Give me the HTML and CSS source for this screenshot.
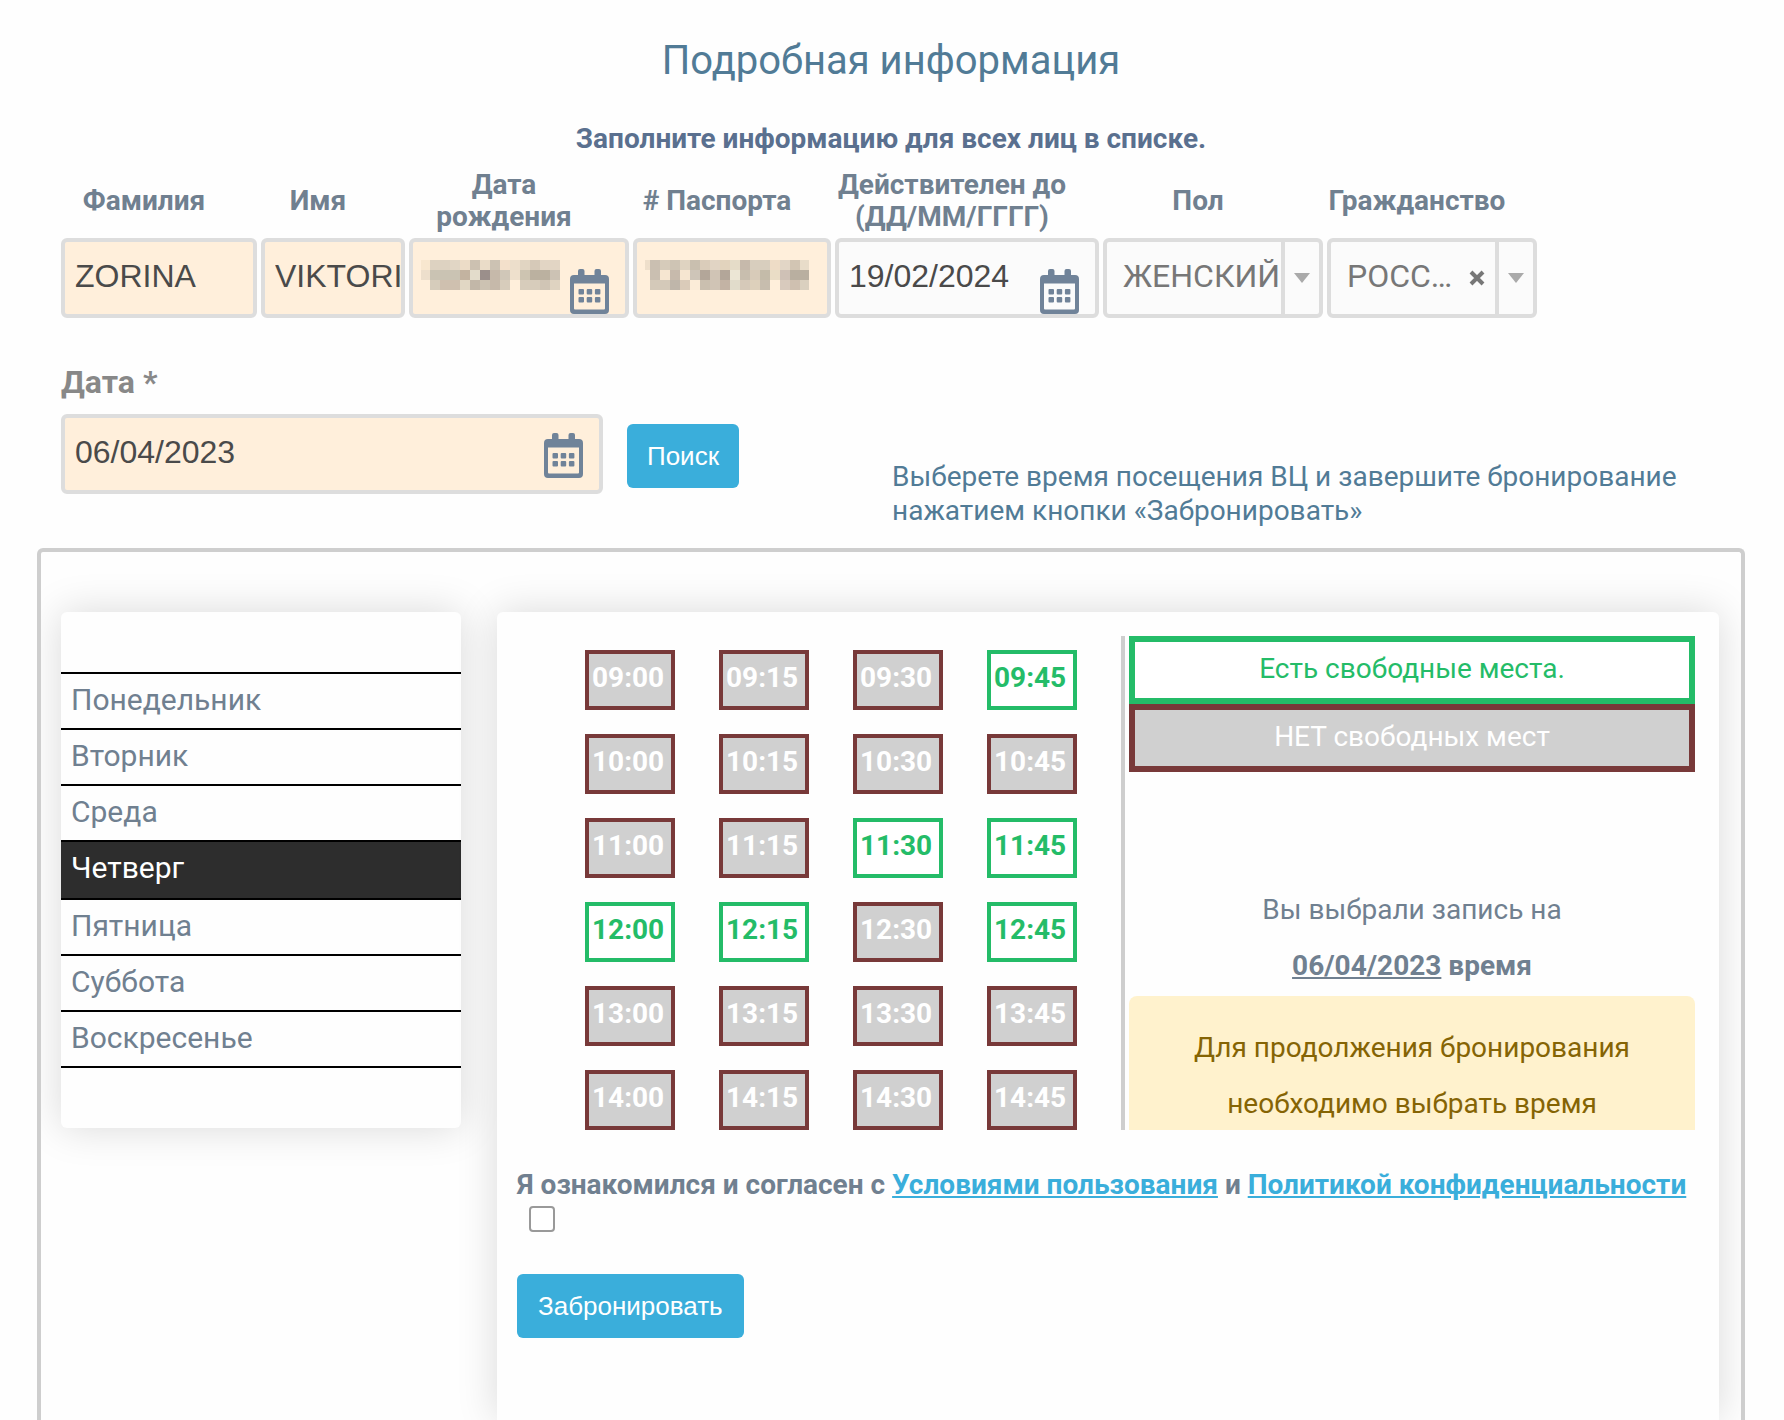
FILE: index.html
```
<!DOCTYPE html>
<html lang="ru">
<head>
<meta charset="utf-8">
<title>Подробная информация</title>
<link rel="stylesheet" href="styles.css">
</head>
<body>
<svg class="sprite" aria-hidden="true">
  <symbol id="calendar" viewBox="0 0 39 45">
    <path fill-rule="evenodd" d="M8 6V2q0-2 2-2h2.500q2 0 2 2v4h10V2q0-2 2-2h2.500q2 0 2 2v4h4q4 0 4 4v31q0 4-4 4h-31q-4 0-4-4V10q0-4 4-4zM4 14.500v25q0 1 1 1h29q1 0 1-1v-25z"/>
    <path d="M9.500 20h3.500q1 0 1 1v3.500q0 1-1 1H9.500q-1 0-1-1V21q0-1 1-1zm8.200 0h3.500q1 0 1 1v3.500q0 1-1 1h-3.500q-1 0-1-1V21q0-1 1-1zm8.200 0h3.500q1 0 1 1v3.500q0 1-1 1h-3.500q-1 0-1-1V21q0-1 1-1zM9.500 28h3.500q1 0 1 1v3.500q0 1-1 1H9.500q-1 0-1-1V29q0-1 1-1zm8.200 0h3.500q1 0 1 1v3.500q0 1-1 1h-3.500q-1 0-1-1V29q0-1 1-1zm8.200 0h3.500q1 0 1 1v3.500q0 1-1 1h-3.500q-1 0-1-1V29q0-1 1-1z"/>
  </symbol>
</svg>

<header class="intro">
  <h1 class="title">Подробная информация</h1>
  <p class="subtitle">Заполните информацию для всех лиц в списке.</p>
</header>

<table class="people">
  <colgroup>
    <col class="w-surname"><col class="w-name"><col class="w-birth"><col class="w-passport"><col class="w-valid"><col class="w-sex"><col class="w-country">
  </colgroup>
  <thead>
    <tr>
      <th><label for="surname">Фамилия</label></th>
      <th><label for="name">Имя</label></th>
      <th><label for="birth">Дата рождения</label></th>
      <th><label for="passport"># Паспорта</label></th>
      <th class="nowrap"><label for="valid">Действителен до<br>(ДД/ММ/ГГГГ)</label></th>
      <th><label for="sex">Пол</label></th>
      <th><label for="country">Гражданство</label></th>
    </tr>
  </thead>
  <tbody>
    <tr>
      <td><div class="field filled"><input id="surname" type="text" value="ZORINA"></div></td>
      <td><div class="field filled"><input id="name" type="text" value="VIKTORIIA"></div></td>
      <td>
        <div class="field filled">
          <input id="birth" type="text">
          <svg class="mask" width="139" height="30" viewBox="1 0 139 30" shape-rendering="crispEdges" aria-hidden="true">
            <path fill="#f8e7cf" d="M0 0h10v10H0z"/><path fill="#ddd2c1" d="M10 0h20v10H10z"/><path fill="#e1d6c5" d="M30 0h10v10H30z"/><path fill="#ecdcc7" d="M40 0h10v10H40z"/><path fill="#ccc1b1" d="M50 0h10v10H50z"/><path fill="#eadcc8" d="M60 0h10v10H60z"/><path fill="#ccc2b3" d="M70 0h10v10H70z"/><path fill="#f3e0cb" d="M80 0h10v10H80z"/><path fill="#ecdecb" d="M90 0h10v10H90z"/><path fill="#e1d5c2" d="M100 0h10v10h-10z"/><path fill="#d6c9b8" d="M110 0h10v10h-10z"/><path fill="#e2d5c4" d="M120 0h20v10h-20z"/>
            <path fill="#eddfcc" d="M0 10h10v10H0z"/><path fill="#cac3b3" d="M10 10h30v10H10z"/><path fill="#c3b3a0" d="M40 10h10v10H40z"/><path fill="#e3dccb" d="M50 10h10v10H50z"/><path fill="#9b8f8b" d="M60 10h10v10H60z"/><path fill="#c6b9aa" d="M70 10h10v20H70z"/><path fill="#d0c7b8" d="M80 10h10v10H80z"/><path fill="#eee0cc" d="M90 10h10v10H90z"/><path fill="#cdc4b1" d="M100 10h10v10h-10z"/><path fill="#bbb1a0" d="M110 10h20v10h-20z"/><path fill="#ccc2b4" d="M130 10h10v10h-10z"/>
            <path fill="#d6ccbb" d="M10 20h10v10H10z"/><path fill="#cfc0af" d="M20 20h20v10H20z"/><path fill="#e1d7c4" d="M40 20h10v10H40z"/><path fill="#c2b7a8" d="M50 20h10v10H50z"/><path fill="#ccc2b2" d="M60 20h10v10H60z"/><path fill="#d7ccbb" d="M80 20h10v10H80zM100 20h20v10h-20z"/><path fill="#d0c5b5" d="M120 20h10v10h-10z"/><path fill="#dfd3c1" d="M130 20h10v10h-10z"/>
          </svg>
          <svg class="icon low" aria-hidden="true"><use href="#calendar"/></svg>
        </div>
      </td>
      <td>
        <div class="field filled">
          <input id="passport" type="text">
          <svg class="mask" width="164" height="30" viewBox="5 0 164 30" shape-rendering="crispEdges" aria-hidden="true">
            <path fill="#eedfcb" d="M0 0h10v10H0z"/><path fill="#cabfb1" d="M10 0h10v20H10z"/><path fill="#d6cbba" d="M20 0h10v10H20z"/><path fill="#cec4b4" d="M30 0h10v10H30z"/><path fill="#dfd3c1" d="M40 0h10v10H40z"/><path fill="#c9bfaf" d="M50 0h10v10H50z"/><path fill="#daccba" d="M60 0h10v10H60z"/><path fill="#e1d4c4" d="M70 0h10v10H70z"/><path fill="#e2d3bd" d="M80 0h10v10H80z"/><path fill="#e5dcc8" d="M90 0h10v10H90z"/><path fill="#c6b9ab" d="M100 0h10v10h-10z"/><path fill="#d8cebe" d="M110 0h20v10h-20z"/><path fill="#eedcc6" d="M130 0h10v10h-10z"/><path fill="#e2d6c6" d="M140 0h10v10h-10z"/><path fill="#d2c5b3" d="M150 0h10v10h-10z"/><path fill="#e8dcc9" d="M160 0h10v10h-10z"/>
            <path fill="#f6e6d1" d="M20 10h10v10H20zM40 10h10v10H40z"/><path fill="#c7baac" d="M30 10h10v10H30z"/><path fill="#cec5b8" d="M50 10h10v10H50z"/><path fill="#b3a699" d="M60 10h10v10H60zM80 10h10v10H80z"/><path fill="#d0c4b5" d="M70 10h10v20H70z"/><path fill="#ece6d5" d="M90 10h10v10H90z"/><path fill="#c8beae" d="M100 10h10v10h-10z"/><path fill="#d8cbb9" d="M110 10h10v10h-10z"/><path fill="#c4bba9" d="M120 10h10v10h-10z"/><path fill="#eaddc6" d="M130 10h10v10h-10z"/><path fill="#cfc1b6" d="M140 10h10v10h-10z"/><path fill="#b9afa0" d="M150 10h20v10h-20z"/>
            <path fill="#d4c9b9" d="M10 20h20v10H10z"/><path fill="#bfb6aa" d="M30 20h10v10H30z"/><path fill="#dacbb9" d="M40 20h10v10H40z"/><path fill="#fbecd8" d="M50 20h10v10H50z"/><path fill="#cabfaf" d="M60 20h10v10H60z"/><path fill="#c3b3a4" d="M80 20h10v10H80z"/><path fill="#e1dccb" d="M90 20h10v10H90z"/><path fill="#d6c9b9" d="M100 20h10v10h-10z"/><path fill="#ddd0bb" d="M110 20h10v10h-10z"/><path fill="#c7bdae" d="M120 20h10v10h-10z"/><path fill="#d8cabd" d="M140 20h10v10h-10z"/><path fill="#cfc0b0" d="M150 20h10v10h-10z"/><path fill="#dad0bf" d="M160 20h10v10h-10z"/>
          </svg>
        </div>
      </td>
      <td><div class="field"><input id="valid" type="text" value="19/02/2024"><svg class="icon low" aria-hidden="true"><use href="#calendar"/></svg></div></td>
      <td>
        <div class="field choice">
          <select id="sex"><option>ЖЕНСКИЙ</option><option>МУЖСКОЙ</option></select>
          <span class="arrow"></span>
        </div>
      </td>
      <td>
        <div class="field choice">
          <select id="country"><option>РОССИЙСКАЯ ФЕДЕРАЦИЯ</option></select>
          <button class="clear" type="button" aria-label="Очистить"><svg width="16" height="16" viewBox="0 0 16 16" aria-hidden="true"><path d="M2 2l12 12M14 2L2 14"/></svg></button>
          <span class="arrow"></span>
        </div>
      </td>
    </tr>
  </tbody>
</table>

<form class="search">
  <div class="search-date">
    <label class="search-label" for="date">Дата *</label>
    <div class="field filled"><input id="date" type="text" value="06/04/2023"><svg class="icon" aria-hidden="true"><use href="#calendar"/></svg></div>
  </div>
  <button class="primary search-button" type="button">Поиск</button>
  <p class="hint">Выберете время посещения ВЦ и завершите бронирование нажатием кнопки «Забронировать»</p>
</form>

<main class="panel">
  <ul class="days">
    <li><a href="#">Понедельник</a></li>
    <li><a href="#">Вторник</a></li>
    <li><a href="#">Среда</a></li>
    <li><a class="current" href="#">Четверг</a></li>
    <li><a href="#">Пятница</a></li>
    <li><a href="#">Суббота</a></li>
    <li><a href="#">Воскресенье</a></li>
  </ul>

  <section class="booking">
    <div class="schedule">
      <div class="times">
        <button class="time" type="button">09:00</button><button class="time" type="button">09:15</button><button class="time" type="button">09:30</button><button class="time free" type="button">09:45</button>
        <button class="time" type="button">10:00</button><button class="time" type="button">10:15</button><button class="time" type="button">10:30</button><button class="time" type="button">10:45</button>
        <button class="time" type="button">11:00</button><button class="time" type="button">11:15</button><button class="time free" type="button">11:30</button><button class="time free" type="button">11:45</button>
        <button class="time free" type="button">12:00</button><button class="time free" type="button">12:15</button><button class="time" type="button">12:30</button><button class="time free" type="button">12:45</button>
        <button class="time" type="button">13:00</button><button class="time" type="button">13:15</button><button class="time" type="button">13:30</button><button class="time" type="button">13:45</button>
        <button class="time" type="button">14:00</button><button class="time" type="button">14:15</button><button class="time" type="button">14:30</button><button class="time" type="button">14:45</button>
      </div>
      <div class="summary">
        <p class="legend free">Есть свободные места.</p>
        <p class="legend">НЕТ свободных мест</p>
        <p class="chosen">Вы выбрали запись на<br><b><u>06/04/2023</u> время</b></p>
        <p class="notice">Для продолжения бронирования<br>необходимо выбрать время</p>
      </div>
    </div>
    <p class="terms">
      <label for="agree">Я ознакомился и согласен с <a href="#">Условиями пользования</a> и <a href="#">Политикой конфиденциальности</a></label>
      <input id="agree" type="checkbox">
    </p>
    <button class="primary" type="button">Забронировать</button>
  </section>
</main>
</body>
</html>
```
FILE: styles.css
```
* {
  box-sizing: border-box;
}

body {
  display: flex;
  flex-direction: column;
  min-height: 100vh;
  margin: 0;
  padding: 0 39px 0 37px;
  background: #fefefe;
  color: #708090;
  font: 28px/34px Roboto, sans-serif;
}

h1, p, ul {
  margin: 0;
  padding: 0;
}

input, select, button {
  font: inherit;
}

.sprite {
  position: absolute;
  width: 0;
  height: 0;
}

.intro {
  padding-top: 37px;
  text-align: center;
}

.title {
  color: #517b96;
  font-size: 40px;
  font-weight: 400;
  line-height: 48px;
}

.subtitle {
  margin-top: 38px;
  color: #5a708f;
  font-weight: 700;
  line-height: 32px;
}

/* Traveller details */
.people {
  width: 1480px;
  margin: 14px 0 0 22px;
  border-collapse: collapse;
  table-layout: fixed;
}

.w-surname { width: 200px; }
.w-name { width: 148px; }
.w-birth { width: 224px; }
.w-passport { width: 202px; }
.w-valid { width: 268px; }
.w-sex { width: 224px; }
.w-country { width: 214px; }

.people th {
  padding: 0 30px 5px 0;
  line-height: 32px;
}

.people .nowrap {
  white-space: nowrap;
}

.people td {
  padding: 0 2px;
}

.field {
  position: relative;
  display: flex;
  height: 80px;
  border: 4px solid #ddd;
  border-radius: 6px;
  background: #fbfbfb;
}

.field.filled {
  background: #ffefdb;
}

.field input {
  width: 100%;
  min-width: 0;
  padding: 0 0 4px 10px;
  border: 0;
  background: none;
  color: #4a4a4a;
  font-family: "Liberation Sans", Arial, sans-serif;
  font-size: 32px;
}

.icon {
  position: absolute;
  top: 15px;
  right: 16px;
  width: 39px;
  height: 45px;
  fill: #708399;
}

.icon.low {
  top: 27px;
}

.mask {
  position: absolute;
  top: 18px;
  left: 8px;
}

.choice select {
  flex: 1;
  min-width: 0;
  padding: 0 0 4px 16px;
  border: 0;
  background: none;
  color: #777;
  appearance: none;
  font-size: 32px;
  text-overflow: ellipsis;
}

.clear {
  display: grid;
  place-items: center;
  width: 36px;
  padding: 0;
  border: 0;
  background: none;
}

.clear svg {
  stroke: #777;
  stroke-width: 4;
}

.arrow {
  display: grid;
  place-items: center;
  width: 38px;
  border-left: 4px solid #ddd;
}

.arrow::after {
  border: 8px solid transparent;
  border-width: 10px 8px 0;
  border-top-color: #aaa;
  content: "";
}

/* Date search */
.search {
  display: flex;
  align-items: flex-start;
  margin-top: 44px;
  padding: 0 22px 0 24px;
}

.search-date {
  width: 542px;
}

.search-label {
  display: block;
  margin-bottom: 12px;
  color: #888;
  font-size: 32px;
  font-weight: 700;
  line-height: 40px;
}

.primary {
  height: 64px;
  padding: 0 21px;
  border: 0;
  border-radius: 6px;
  background: #3aaedb;
  color: #fff;
  font-family: "Liberation Sans", Arial, sans-serif;
  font-size: 26px;
}

.search-button {
  width: 112px;
  margin: 62px 153px 0 24px;
  padding: 0;
}

.hint {
  flex: 1;
  margin-top: 98px;
  color: #517b96;
}

/* Schedule */
.panel {
  display: flex;
  flex: 1;
  align-items: flex-start;
  gap: 36px;
  margin-top: 20px;
  padding: 60px 22px 0 20px;
  border: 4px solid #cecece;
  border-bottom: 0;
  border-radius: 6px 6px 0 0;
  overflow: hidden;
}

.days, .booking {
  border-radius: 6px;
  background: #fefefe;
  box-shadow: 0 0 40px rgba(0, 0, 0, .15);
}

.days {
  width: 400px;
  padding: 60px 0;
  list-style: none;
}

.days li {
  border-bottom: 2px solid #000;
}

.days li:first-child {
  border-top: 2px solid #000;
}

.days a {
  display: block;
  padding: 0 10px 2px;
  color: #708090;
  font-size: 30px;
  line-height: 52px;
  text-decoration: none;
}

.days .current {
  padding-bottom: 4px;
  background: #2d2d2d;
  color: #fff;
}

.booking {
  flex: 1;
  align-self: stretch;
  padding: 24px 24px 80px 20px;
  border-radius: 6px 6px 0 0;
}

.schedule {
  display: flex;
  height: 494px;
  overflow: hidden;
}

.times {
  display: grid;
  flex: 1;
  grid-template-columns: repeat(4, 90px);
  grid-auto-rows: 60px;
  gap: 24px 44px;
  padding: 14px 0 0 68px;
}

.time {
  padding: 0 0 4px 3px;
  border: 4px solid #783939;
  background: #d0d0d0;
  color: #fff;
  font-weight: 700;
  text-align: left;
}

.time.free, .legend.free {
  border-color: #24bc68;
  background: #fff;
  color: #24bc68;
}

.summary {
  width: 574px;
  padding-left: 4px;
  border-left: 4px solid #cecece;
  text-align: center;
}

.legend {
  height: 68px;
  border: 6px solid #783939;
  background: #d0d0d0;
  color: #fff;
  line-height: 54px;
}

.chosen {
  margin-top: 110px;
  line-height: 56px;
}

.notice {
  margin-top: 2px;
  padding: 24px;
  border-radius: 8px;
  background: #fff2cd;
  color: #856404;
  line-height: 56px;
}

.terms {
  margin: 38px 0 42px;
  font-weight: 700;
}

.terms a {
  color: #3aaedb;
}

.terms input {
  display: block;
  width: 26px;
  height: 26px;
  margin: 4px 12px 0;
  border: 2px solid #999;
  border-radius: 4px;
  background: #fff;
  appearance: none;
}
```
